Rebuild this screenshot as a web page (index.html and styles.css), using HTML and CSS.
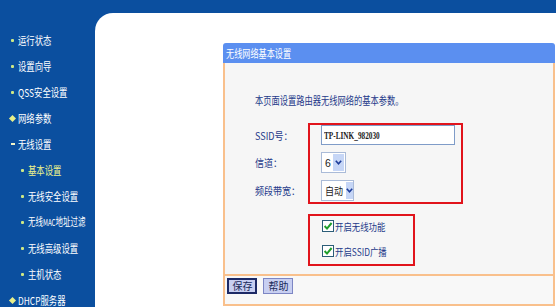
FILE: index.html
```html
<!DOCTYPE html>
<html lang="zh-CN">
<head>
<meta charset="utf-8">
<title>无线网络基本设置</title>
<link rel="stylesheet" href="styles.css">
</head>
<body>
<div class="topbar"></div>
<div class="layout">
  <nav class="menu">
    <div class="item"><span class="dot"></span><span class="t">运行状态</span></div>
    <div class="item"><span class="dot"></span><span class="t">设置向导</span></div>
    <div class="item"><span class="dot"></span><span class="t">QSS安全设置</span></div>
    <div class="item"><span class="plus"></span><span class="t">网络参数</span></div>
    <div class="item"><span class="minus"></span><span class="t">无线设置</span></div>
    <div class="item sub cur"><span class="dot"></span><span class="t">基本设置</span></div>
    <div class="item sub"><span class="dot"></span><span class="t">无线安全设置</span></div>
    <div class="item sub"><span class="dot"></span><span class="t tmac">无线<span class="mac">MAC</span>地址过滤</span></div>
    <div class="item sub"><span class="dot"></span><span class="t">无线高级设置</span></div>
    <div class="item sub"><span class="dot"></span><span class="t">主机状态</span></div>
    <div class="item"><span class="plus"></span><span class="t">DHCP服务器</span></div>
  </nav>
  <main class="main">
    <section class="panel">
      <div class="phead"><span class="t">无线网络基本设置</span></div>
      <div class="pbody">
        <p class="desc"><span class="t tdesc">本页面设置路由器无线网络的基本参数。</span></p>
        <div class="form">
          <div class="labels">
            <div class="r1 lbl"><span class="t tl">SSID号：</span></div>
            <div class="r lbl"><span class="t tl">信道：</span></div>
            <div class="r lbl"><span class="t tl">频段带宽：</span></div>
          </div>
          <div class="mark1">
            <div class="r1 ssid"><span class="t tin">TP-LINK_982030</span></div>
            <div class="r sel w1"><span class="sv">6</span><span class="arr"><svg width="7" height="5" viewBox="0 0 7 5"><path d="M0.8 0.8 L3.5 3.8 L6.2 0.8" fill="none" stroke="#1d3d9a" stroke-width="1.6"/></svg></span></div>
            <div class="r sel w2"><span class="sv"><span class="t tsel">自动</span></span><span class="arr"><svg width="7" height="5" viewBox="0 0 7 5"><path d="M0.8 0.8 L3.5 3.8 L6.2 0.8" fill="none" stroke="#1d3d9a" stroke-width="1.6"/></svg></span></div>
          </div>
        </div>
        <div class="mark2">
          <div class="chk"><svg class="cb" width="12" height="12" viewBox="0 0 12 12"><rect x="0.5" y="0.5" width="11" height="11" fill="#fff" stroke="#2b5d78"/><path d="M2.6 6 L5 8.6 L9.6 3" fill="none" stroke="#1e9e2a" stroke-width="2"/></svg><span class="t tc">开启无线功能</span></div>
          <div class="chk"><svg class="cb" width="12" height="12" viewBox="0 0 12 12"><rect x="0.5" y="0.5" width="11" height="11" fill="#fff" stroke="#2b5d78"/><path d="M2.6 6 L5 8.6 L9.6 3" fill="none" stroke="#1e9e2a" stroke-width="2"/></svg><span class="t tc">开启SSID广播</span></div>
        </div>
      </div>
      <div class="pfoot">
        <button class="btn save">保 存</button>
        <button class="btn">帮 助</button>
      </div>
    </section>
  </main>
</div>
</body>
</html>
```
FILE: styles.css
```css
* { box-sizing: border-box; margin: 0; padding: 0; }
html, body { width: 556px; height: 307px; overflow: hidden; }
body {
  background: #0b4f9f;
  font-family: "Noto Sans CJK SC", "Noto Sans", sans-serif;
}
.topbar { height: 13px; }
.layout { display: flex; height: 294px; }

.t {
  display: inline-block;
  white-space: nowrap;
  transform-origin: 0 50%;
  transform: scaleX(.76);
}

/* sidebar */
.menu { width: 95px; flex: none; padding-top: 14px; color: #fff; position: relative; z-index: 1; }
.item {
  height: 26px;
  display: flex;
  align-items: center;
  padding-left: 11px;
  font-size: 11px;
  line-height: 12px;
  white-space: nowrap;
}
.item.sub { padding-left: 21px; }
.item.cur { color: #eef48c; }
.tmac { transform: scaleX(.68); }
.mac { font-size: 9px; }
.dot {
  width: 3px; height: 3px; flex: none;
  background: #cfe884;
  border-radius: 1px;
  margin-right: 4px;
}
.plus {
  width: 5px; height: 5px; flex: none;
  background: #e8ef8a;
  transform: rotate(45deg);
  margin-right: 3px;
  margin-left: -1px;
}
.minus {
  width: 4px; height: 2px; flex: none;
  background: #f2f5c8;
  margin-right: 3px;
}

/* main area */
.main {
  flex: 1;
  background: #fff;
  border-top-left-radius: 18px;
  padding: 30px 0 0 128px;
}
.panel { width: 332px; }
.phead {
  height: 20px;
  background: #5b8ff0;
  border-radius: 3px 3px 0 0;
  color: #fff;
  font-size: 11px;
  display: flex;
  align-items: center;
  padding-left: 3px;
}
.phead .t { transform: scaleX(.74); }
.pbody {
  background: #f6f6f6;
  border-left: 2px solid #f9c08c;
  border-right: 2px solid #f9c08c;
  padding: 30px 0 8px 30px;
  color: #1e3a8a;
}
.desc { height: 14px; line-height: 14px; font-size: 11px; }
.tdesc { transform: scaleX(.75); }

.form { display: flex; margin-top: 16px; }
.labels { width: 53px; padding-top: 2px; }
.r1 { height: 20px; }
.r { height: 21px; margin-top: 7px; }
.lbl { display: flex; align-items: center; font-size: 10.5px; }
.tl { transform: scaleX(.86); }

.mark1 {
  width: 155px;
  border: 2px solid #e1141c;
  padding: 0 0 1px 11px;
}
.ssid {
  width: 134px;
  background: #fff;
  border: 1px solid #7f9cc8;
  display: flex;
  align-items: center;
  padding-left: 2px;
  font-family: "Liberation Serif", serif;
  font-weight: bold;
  font-size: 11px;
  color: #222;
}
.tin { transform: scaleX(.66); }
.sel {
  display: flex;
  align-items: stretch;
  background: #fff;
  border: 1px solid #aabbd8;
  padding: 1px;
  font-size: 10.5px;
  color: #222;
}
.w1 { width: 25px; }
.w2 { width: 33px; }
.sv { flex: 1; display: flex; align-items: center; padding-left: 2px; font-family: "Liberation Sans", "Noto Sans CJK SC", sans-serif; }
.tsel { transform: scaleX(.86); font-family: "Noto Sans CJK SC", sans-serif; }
.arr {
  width: 11px;
  background: #c6d6f6;
  display: flex;
  align-items: center;
  justify-content: center;
}

.mark2 {
  width: 107px;
  height: 52px;
  margin: 10px 0 0 53px;
  border: 2px solid #e1141c;
  padding: 2px 0 0 12px;
  display: flex;
  flex-direction: column;
  gap: 9px;
}
.chk {
  height: 16px;
  display: flex;
  align-items: center;
  font-size: 10px;
  color: #1e3a8a;
}
.cb { flex: none; margin-right: 1px; }
.tc { transform: scaleX(.84); }

.pfoot {
  background: #f8f8f8;
  border: 2px solid #f9c08c;
  height: 32px;
  padding: 2px 0 0 2px;
  display: flex;
  align-items: flex-start;
  gap: 6px;
}
.btn {
  height: 16px;
  width: 30px;
  background: #c8cff1;
  border: 1px solid #7d86c4;
  font-family: "Noto Sans CJK SC", sans-serif;
  font-size: 10px;
  line-height: 12px;
  color: #1a2a5a;
  letter-spacing: -1px;
}
.btn.save { border: 2px solid #1d2a66; }
```
